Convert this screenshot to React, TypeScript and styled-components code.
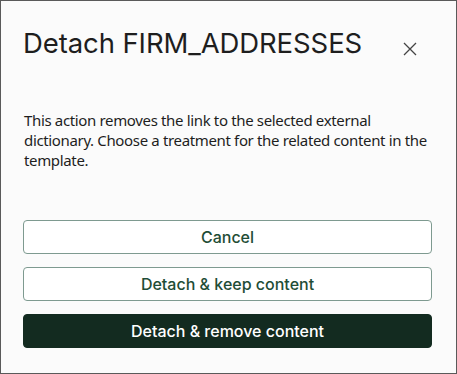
import React from 'react'
import styled, { createGlobalStyle } from 'styled-components'

const GlobalStyle = createGlobalStyle`
  html, body {
    margin: 0;
    padding: 0;
    background: #fbfbfb;
  }
`

const Dialog = styled.div`
  box-sizing: border-box;
  width: 457px;
  height: 374px;
  border: 1px solid #5a5a5a;
  background: #fbfbfb;
  padding: 22px 24px 0 22px;
  display: flex;
  flex-direction: column;
  font-family: Inter, 'Liberation Sans', sans-serif;
  color: #1c1c1c;
`

const Header = styled.div`
  display: flex;
  align-items: center;
  justify-content: space-between;
  height: 40px;
`

const Title = styled.h2`
  margin: 0;
  font-size: 27.5px;
  font-weight: 400;
  letter-spacing: -0.1px;
  color: #1e1e1e;
`

const CloseButton = styled.button`
  border: none;
  background: transparent;
  padding: 0;
  margin-right: 14px;
  margin-top: 12px;
  width: 16px;
  height: 16px;
  display: flex;
  cursor: pointer;
`

const Message = styled.p`
  margin: 47px 0 0 1px;
  font-family: 'Noto Sans', 'Open Sans', sans-serif;
  font-size: 15px;
  line-height: 20px;
  letter-spacing: -0.35px;
  color: #1e1e1e;
`

const Actions = styled.div`
  margin-top: 50px;
  display: flex;
  flex-direction: column;
  gap: 13px;
`

const ActionButton = styled.button<{ $primary?: boolean }>`
  box-sizing: border-box;
  height: 34px;
  width: 100%;
  border-radius: 4px;
  border: 1px solid ${props => props.$primary ? '#132b20' : '#7e9a90'};
  background: ${props => props.$primary ? '#132b20' : '#ffffff'};
  color: ${props => props.$primary ? '#ffffff' : '#1f4d36'};
  font-family: Inter, 'Liberation Sans', sans-serif;
  font-size: 16px;
  font-weight: 500;
  cursor: pointer;
`

const App: React.FC = () => {
  const actions = [
    { label: 'Cancel', primary: false },
    { label: 'Detach & keep content', primary: false },
    { label: 'Detach & remove content', primary: true },
  ]

  return <>
    <GlobalStyle />
    <Dialog>
      <Header>
        <Title>Detach FIRM_ADDRESSES</Title>
        <CloseButton aria-label='Close'>
          <svg width='16' height='16' viewBox='0 0 16 16'>
            <path d='M2 2 L14 14 M14 2 L2 14' stroke='#444' strokeWidth='1.3' fill='none' />
          </svg>
        </CloseButton>
      </Header>
      <Message>
        This action removes the link to the selected external dictionary. Choose a treatment for the related content in the template.
      </Message>
      <Actions>
        {actions.map((a, idx) =>
          <ActionButton key={idx} $primary={a.primary}>{a.label}</ActionButton>)}
      </Actions>
    </Dialog>
  </>
}

export default App
